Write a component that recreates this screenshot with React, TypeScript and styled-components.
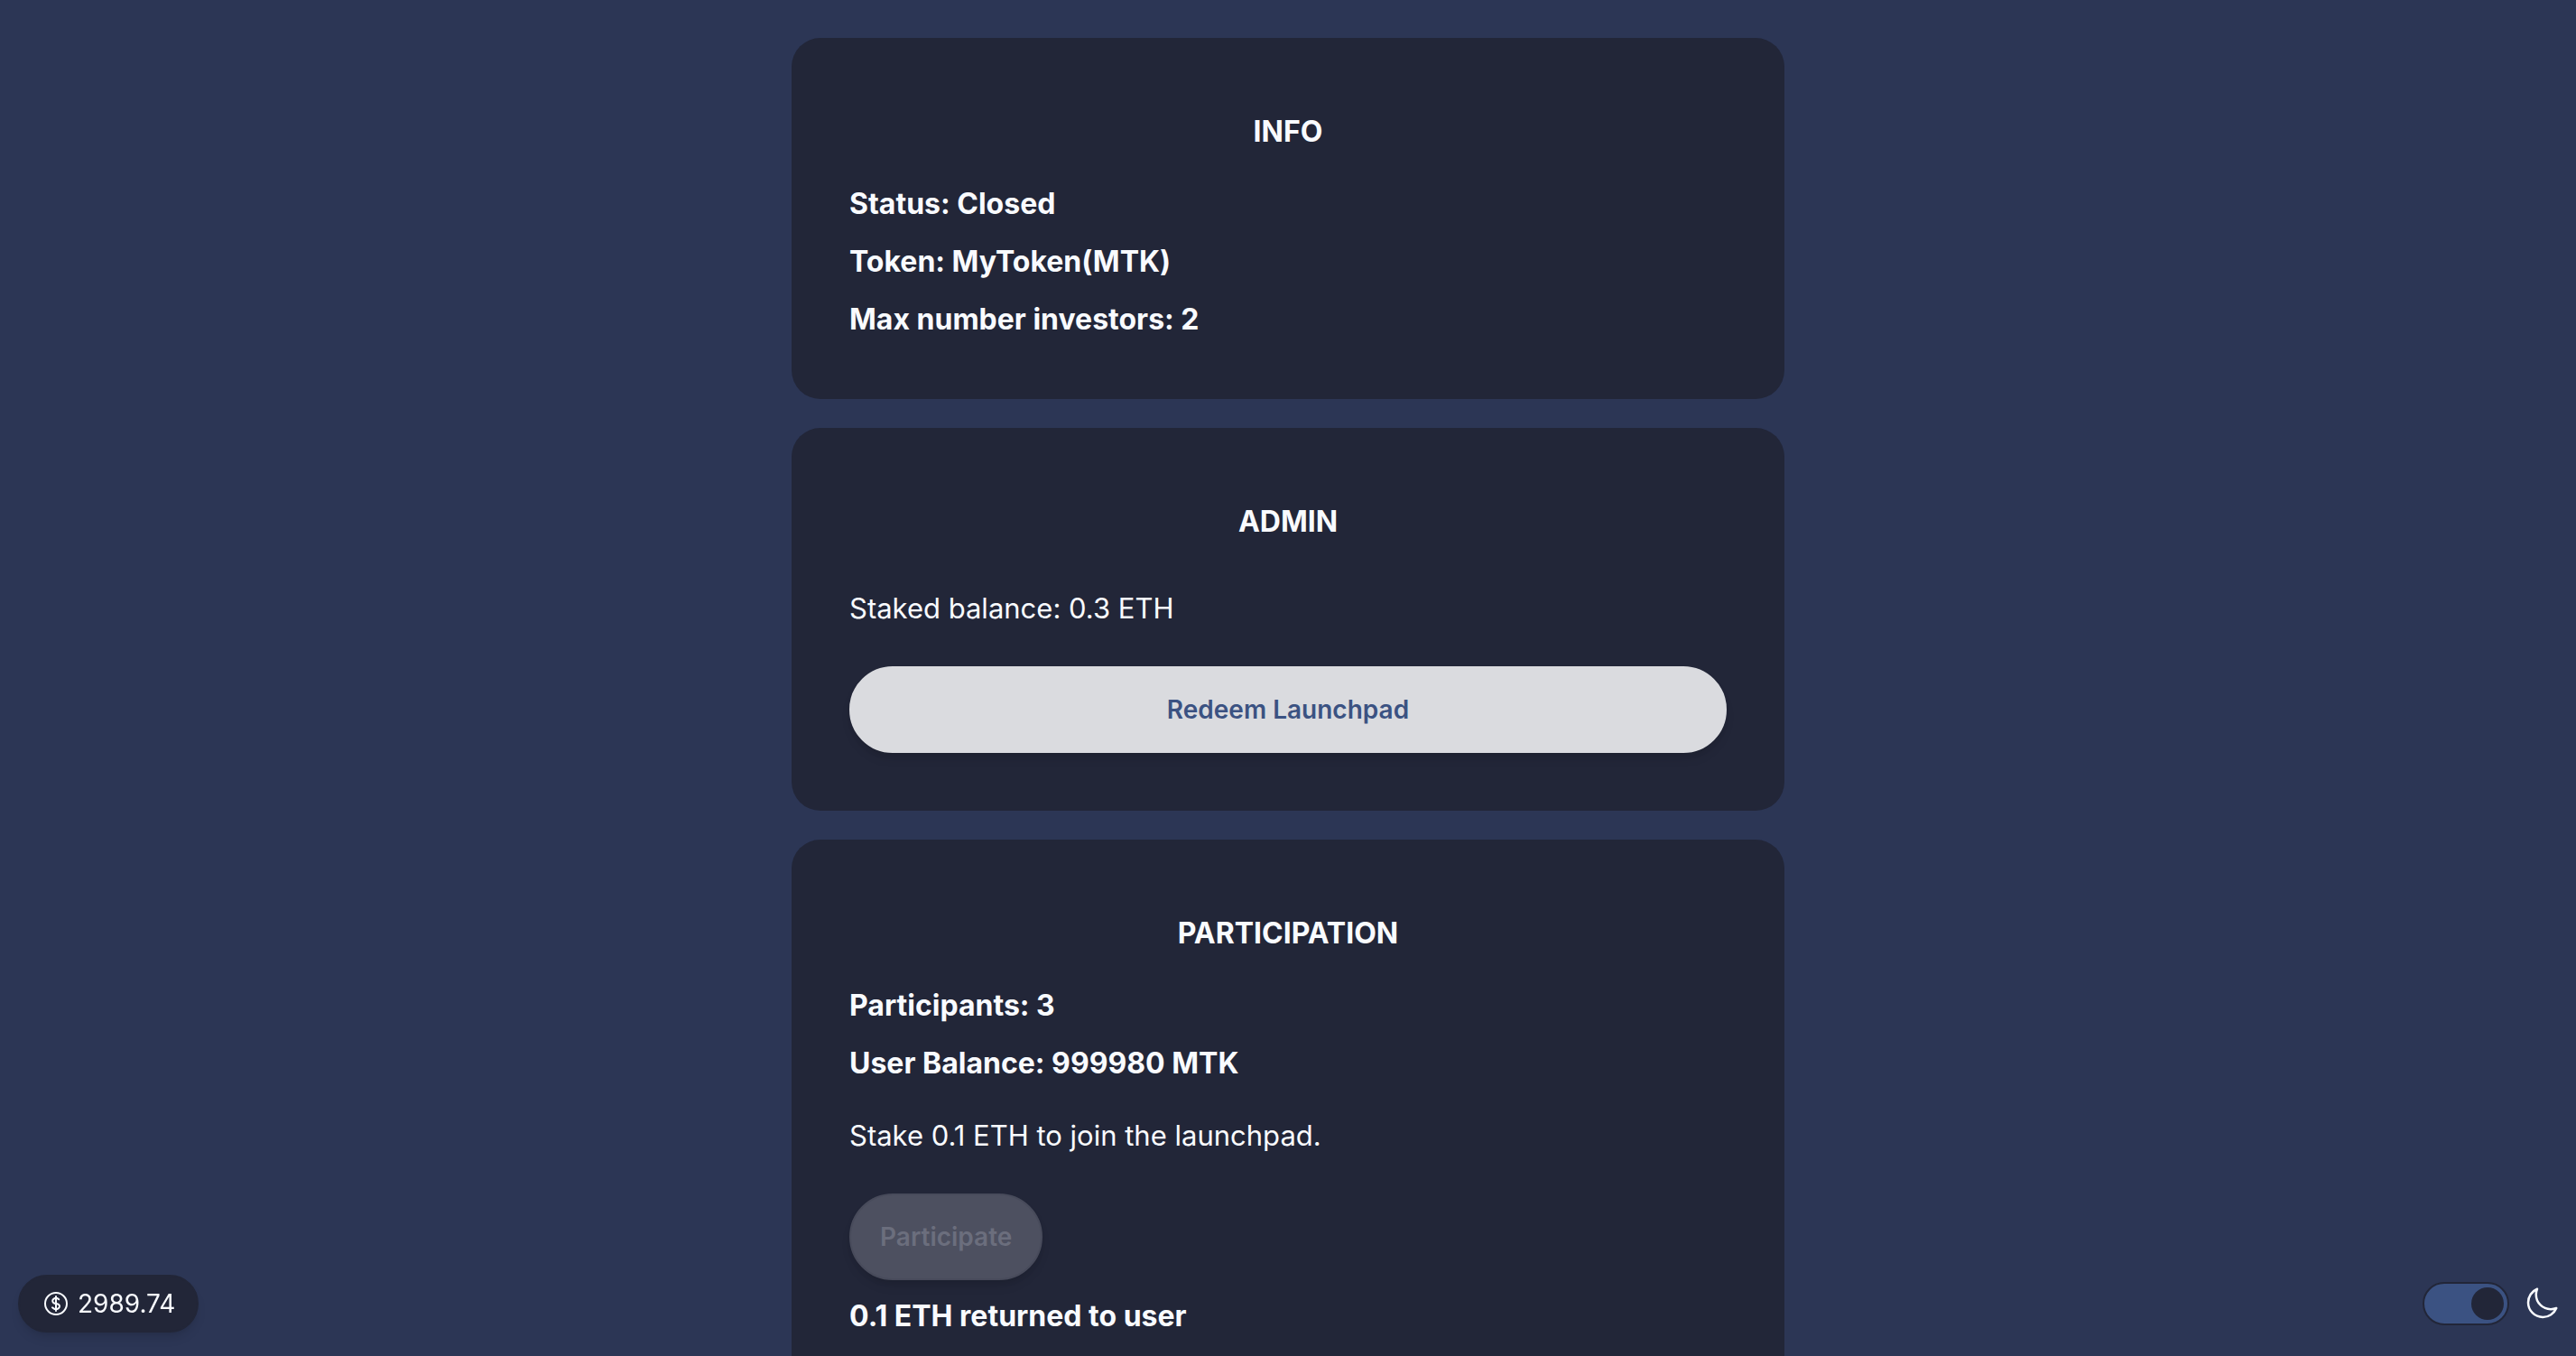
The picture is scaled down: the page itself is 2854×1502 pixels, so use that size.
import React, { useState } from "react";
import styled, { createGlobalStyle } from "styled-components";

const color = {
  page: "#2c3655",
  panel: "#222638",
  track: "#3b5282",
  text: "#f9fbff",
};

const GlobalStyle = createGlobalStyle`
  *, *::before, *::after { box-sizing: border-box; }
  body {
    margin: 0;
    background: ${color.page};
    color: ${color.text};
    font-family: Inter, "Liberation Sans", sans-serif;
    font-size: 32px;
    line-height: 48px;
  }
`;

const Page = styled.div`
  height: 100vh;
  overflow: hidden;
`;

const Main = styled.main`
  display: flex;
  flex-direction: column;
  align-items: center;
  gap: 32px;
  padding: 42px 32px;
`;

const Card = styled.section`
  display: flex;
  flex-direction: column;
  width: 100%;
  max-width: 1100px;
  padding: 80px 64px 64px;
  border-radius: 32px;
  background: ${color.panel};
`;

const Title = styled.h2`
  margin: 0 0 32px;
  font-size: inherit;
  font-weight: 700;
  text-align: center;
`;

const Facts = styled.div`
  display: flex;
  flex-direction: column;
  gap: 16px;
`;

const Fact = styled.p`
  margin: 0;
  font-weight: 700;
`;

const Note = styled.p<{ $top: number }>`
  margin: ${(p) => p.$top}px 0 40px;
  font-size: 31px;
`;

const Button = styled.button<{ $wide?: boolean }>`
  align-self: ${(p) => (p.$wide ? "stretch" : "flex-start")};
  height: 96px;
  padding: 0 32px;
  border: 2px solid #dadbdf;
  border-radius: 48px;
  background: #dadbdf;
  color: ${color.track};
  font: inherit;
  font-size: 28px;
  font-weight: 600;
  box-shadow: 0 8px 12px -2px rgba(0, 0, 0, 0.1), 0 4px 8px -4px rgba(0, 0, 0, 0.1);

  &:disabled {
    border-color: #484b5b;
    background: #4d5060;
    color: #6b6e7d;
  }
`;

const Result = styled(Fact)`
  margin-top: 16px;
`;

const BottomBar = styled.footer`
  position: fixed;
  inset: auto 0 0 0;
  display: flex;
  align-items: center;
  justify-content: space-between;
  padding: 0 18px 26px 20px;
`;

const Price = styled.button`
  display: flex;
  align-items: center;
  gap: 8px;
  height: 64px;
  padding: 0 24px;
  border: 2px solid ${color.panel};
  border-radius: 32px;
  background: ${color.panel};
  color: ${color.text};
  font: inherit;
  font-size: 28px;
  box-shadow: 0 8px 12px -2px rgba(0, 0, 0, 0.1), 0 4px 8px -4px rgba(0, 0, 0, 0.1);
`;

const ThemeSwitch = styled.label`
  display: flex;
  align-items: center;
  gap: 16px;
`;

const Toggle = styled.input`
  appearance: none;
  display: flex;
  align-items: center;
  width: 96px;
  height: 48px;
  margin: 0;
  padding: 0 4px;
  border: 2px solid ${color.panel};
  border-radius: 24px;
  background: ${color.track};

  &::before {
    content: "";
    width: 36px;
    height: 36px;
    border-radius: 50%;
    background: ${color.panel};
  }

  &:checked {
    justify-content: flex-end;
  }
`;

const Icon = ({ size, path }: { size: number; path: string }) => (
  <svg
    width={size}
    height={size}
    viewBox="0 0 24 24"
    fill="none"
    stroke="currentColor"
    strokeWidth={1.5}
    strokeLinecap="round"
    strokeLinejoin="round"
    aria-hidden="true"
  >
    <path d={path} />
  </svg>
);

const DOLLAR =
  "M12 6v12m-3-2.818l.879.659c1.171.879 3.07.879 4.242 0 1.172-.879 1.172-2.303 0-3.182C13.536 12.219 12.768 12 12 12c-.725 0-1.45-.22-2.003-.659-1.106-.879-1.106-2.303 0-3.182s2.9-.879 4.006 0l.415.33M21 12a9 9 0 11-18 0 9 9 0 0118 0z";
const MOON =
  "M21.752 15.002A9.718 9.718 0 0118 15.75c-5.385 0-9.75-4.365-9.75-9.75 0-1.33.266-2.597.748-3.752A9.753 9.753 0 003 11.25C3 16.635 7.365 21 12.75 21a9.753 9.753 0 009.002-5.998z";

export default function App() {
  const [dark, setDark] = useState(true);

  return (
    <Page>
      <GlobalStyle />
      <Main>
        <Card>
          <Title>INFO</Title>
          <Facts>
            <Fact>Status: Closed</Fact>
            <Fact>Token: MyToken(MTK)</Fact>
            <Fact>Max number investors: 2</Fact>
          </Facts>
        </Card>
        <Card>
          <Title>ADMIN</Title>
          <Note $top={16}>Staked balance: 0.3 ETH</Note>
          <Button type="button" $wide>
            Redeem Launchpad
          </Button>
        </Card>
        <Card>
          <Title>PARTICIPATION</Title>
          <Facts>
            <Fact>Participants: 3</Fact>
            <Fact>User Balance: 999980 MTK</Fact>
          </Facts>
          <Note $top={32}>Stake 0.1 ETH to join the launchpad.</Note>
          <Button type="button" disabled>
            Participate
          </Button>
          <Result>0.1 ETH returned to user</Result>
        </Card>
      </Main>
      <BottomBar>
        <Price type="button">
          <Icon size={32} path={DOLLAR} />
          2989.74
        </Price>
        <ThemeSwitch>
          <Toggle
            type="checkbox"
            aria-label="Dark theme"
            checked={dark}
            onChange={(e) => setDark(e.target.checked)}
          />
          <Icon size={40} path={MOON} />
        </ThemeSwitch>
      </BottomBar>
    </Page>
  );
}
